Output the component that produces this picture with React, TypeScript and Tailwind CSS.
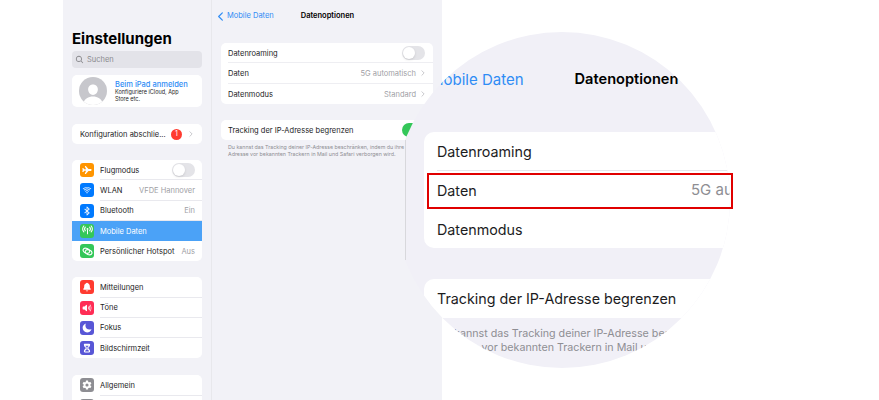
import type { ReactNode } from "react";
import { IoAirplane, IoBluetooth, IoChevronBack, IoChevronForward, IoHourglass, IoMoon, IoNotifications, IoPerson, IoSearch, IoSettingsSharp, IoVolumeHigh, IoWifi } from "react-icons/io5";

function AntennaIcon() {
  return (
    <svg viewBox="0 0 14 14" className="h-[11px] w-[11px]" fill="none" stroke="white" strokeWidth="1.3" strokeLinecap="round">
      <circle cx="7" cy="5" r="1.2" fill="white" stroke="none" />
      <path d="M7 6v5" />
      <path d="M4.3 2.6a3.6 3.6 0 0 0 0 4.8M9.7 2.6a3.6 3.6 0 0 1 0 4.8" />
      <path d="M2.4 1.2a6 6 0 0 0 0 7.6M11.6 1.2a6 6 0 0 1 0 7.6" />
    </svg>
  );
}

function HotspotIcon() {
  return (
    <svg viewBox="0 0 14 14" className="h-[11px] w-[11px]" fill="none" stroke="white" strokeWidth="1.4">
      <ellipse cx="5.6" cy="6" rx="4.4" ry="3" transform="rotate(20 5.6 6)" />
      <ellipse cx="8.4" cy="8" rx="4.4" ry="3" transform="rotate(20 8.4 8)" />
    </svg>
  );
}

function Toggle() {
  return (
    <div className="flex h-[14px] w-[23px] items-center rounded-full bg-[#e4e4e8] p-px">
      <div className="h-[12px] w-[12px] rounded-full bg-white shadow-sm" />
    </div>
  );
}

function SideRow(props: { icon: ReactNode; color: string; label: string; value?: string; toggle?: boolean; active?: boolean; last?: boolean }) {
  const { icon, color, label, value, toggle, active, last } = props;
  return (
    <div className={active ? "flex h-[20.25px] items-center bg-[#4ba2f7] pl-2" : "flex h-[20.25px] items-center pl-2"}>
      <div className={`flex h-[14px] w-[14px] shrink-0 items-center justify-center rounded-[3px] text-[10px] text-white ${color}`}>{icon}</div>
      <div className={`ml-[6px] flex h-full min-w-0 flex-1 items-center justify-between pr-[7px] ${last || active ? "" : "border-b border-[#e9e9ee]"}`}>
        <span className={active ? "pt-px text-[7.5px] text-white" : "pt-px text-[7.5px] text-[#1c1c1e]"}>{label}</span>
        {value && <span className="pt-px text-[7.5px] text-[#a0a0a5]">{value}</span>}
        {toggle && <Toggle />}
      </div>
    </div>
  );
}

function DetailRow(props: { label: string; value?: string; toggle?: boolean; last?: boolean }) {
  return (
    <div className="flex h-[20.3px] items-center pl-[7px]">
      <div className={`flex h-full flex-1 items-center justify-between pr-2 ${props.last ? "" : "border-b border-[#eeeef2]"}`}>
        <span className="pt-px text-[7.5px] text-[#1c1c1e]">{props.label}</span>
        {props.toggle && <Toggle />}
        {props.value && (
          <span className="-mr-[2px] flex items-center gap-[3px] pt-px text-[7.5px] text-[#a0a0a5]">
            {props.value}
            <IoChevronForward className="text-[8px] text-[#b8b8bd]" />
          </span>
        )}
      </div>
    </div>
  );
}

function Sidebar() {
  return (
    <aside className="h-full w-[149px] shrink-0 overflow-hidden border-r border-[#e8e8ec] px-[9px]">
      <div className="flex h-[2px] items-end overflow-hidden text-[7px] text-[#333]">14:41&nbsp;&nbsp;Di. 23. Mai</div>
      <h1 className="mt-[27px] mb-[-1px] text-[15px] leading-5 font-bold text-black">Einstellungen</h1>
      <div className="mt-[3px] flex h-[17px] items-center gap-[3px] rounded-[4px] bg-[#e3e3e9] pl-[3px] text-[7.5px] text-[#8a8a8e]">
        <IoSearch className="text-[9px]" />
        Suchen
      </div>
      <div className="mt-[7px] flex h-[32px] items-center rounded-[5px] bg-white pl-[7px]">
        <div className="flex h-[28px] w-[28px] shrink-0 items-end justify-center overflow-hidden rounded-full bg-[#c7c7cc] text-[24px] text-white">
          <IoPerson className="-mb-[2px]" />
        </div>
        <div className="ml-[8px] w-[76px] min-w-0">
          <div className="text-[7.5px] leading-[9px] font-medium whitespace-nowrap text-[#2f8cf5]">Beim iPad anmelden</div>
          <div className="text-[5.5px] leading-[7px] text-[#1c1c1e]">Konfiguriere iCloud, App<br />Store etc.</div>
        </div>
      </div>
      <div className="mt-[17px] flex h-[20px] items-center rounded-[5px] bg-white pr-[7px] pl-2">
        <span className="flex-1 pt-px text-[7.5px] text-[#1c1c1e]">Konfiguration abschlie...</span>
        <span className="flex h-[11px] w-[11px] items-center justify-center rounded-full bg-[#ff3b30] text-[7px] text-white">1</span>
        <IoChevronForward className="ml-[5px] text-[8px] text-[#b8b8bd]" />
      </div>
      <div className="mt-[16px] overflow-hidden rounded-[5px] bg-white">
        <SideRow icon={<IoAirplane />} color="bg-[#ff9500]" label="Flugmodus" toggle />
        <SideRow icon={<IoWifi />} color="bg-[#007aff]" label="WLAN" value="VFDE Hannover" />
        <SideRow icon={<IoBluetooth />} color="bg-[#007aff]" label="Bluetooth" value="Ein" />
        <SideRow icon={<AntennaIcon />} color="bg-[#34c759]" label="Mobile Daten" active />
        <SideRow icon={<HotspotIcon />} color="bg-[#34c759]" label="Persönlicher Hotspot" value="Aus" last />
      </div>
      <div className="mt-[16px] overflow-hidden rounded-[5px] bg-white">
        <SideRow icon={<IoNotifications />} color="bg-[#ff3b30]" label="Mitteilungen" />
        <SideRow icon={<IoVolumeHigh />} color="bg-[#ff2d55]" label="Töne" />
        <SideRow icon={<IoMoon />} color="bg-[#5856d6]" label="Fokus" />
        <SideRow icon={<IoHourglass />} color="bg-[#5856d6]" label="Bildschirmzeit" last />
      </div>
      <div className="mt-[17px] overflow-hidden rounded-[5px] bg-white">
        <SideRow icon={<IoSettingsSharp />} color="bg-[#8e8e93]" label="Allgemein" />
        <SideRow icon={<IoSettingsSharp />} color="bg-[#8e8e93]" label="Kontrollzentrum" last />
      </div>
    </aside>
  );
}

function Detail() {
  return (
    <main className="h-full min-w-0 flex-1 overflow-hidden px-[9px]">
      <div className="flex h-[2px] items-end justify-end overflow-hidden text-[7px] text-[#333]">100 %</div>
      <div className="mt-[4px] mb-[-1px] flex h-[20px] items-center">
        <IoChevronBack className="-ml-[7px] text-[13px] text-[#2f8cf5]" />
        <span className="text-[7.5px] text-[#2f8cf5]">Mobile Daten</span>
        <span className="ml-[27px] text-[7.5px] font-semibold text-black">Datenoptionen</span>
      </div>
      <div className="mt-[18px] overflow-hidden rounded-[5px] bg-white">
        <DetailRow label="Datenroaming" toggle />
        <DetailRow label="Daten" value="5G automatisch" />
        <DetailRow label="Datenmodus" value="Standard" last />
      </div>
      <div className="mt-[16px] flex h-[20px] items-center justify-between rounded-[5px] bg-white pr-2 pl-[7px]">
        <span className="pt-px text-[7.5px] text-[#1c1c1e]">Tracking der IP-Adresse begrenzen</span>
        <div className="h-[14px] w-[23px] rounded-full bg-[#34c759]" />
      </div>
      <div className="mt-[4px] pl-[7px] text-[5.3px] leading-[7.5px] whitespace-nowrap text-[#8e8e93]">
        <div>Du kannst das Tracking deiner IP-Adresse beschränken, indem du ihre IP-</div>
        <div>Adresse vor bekannten Trackern in Mail und Safari verborgen wird.</div>
      </div>
    </main>
  );
}

function MagnifiedRow(props: { label: string; value?: string; last?: boolean }) {
  return (
    <div className="flex h-[38.7px] items-center pl-[13px]">
      <div className={`flex h-full flex-1 items-center justify-between pr-[32px] ${props.last ? "" : "border-b border-[#e6e6ea]"}`}>
        <span className="pt-[2px] text-[14.3px] text-[#1c1c1e]">{props.label}</span>
        {props.value && <span className="pt-[2px] text-[15px] text-[#8e8e93]">{props.value}</span>}
      </div>
    </div>
  );
}

function Magnifier() {
  return (
    <>
      {/* the round lens is cut off flat on its left side */}
      <div className="absolute top-[32px] left-[405px] h-[336px] w-[325px] overflow-hidden">
        <div className="absolute top-[108px] left-0 h-[120px] w-px bg-[#d8d8dc]" />
        <div className="-ml-[11px] h-[336px] w-[336px] overflow-hidden rounded-full bg-[#f1f0f7]">
          <div className="w-[440px] pt-[38px] pl-[30px]">
            <div className="flex h-[20px] items-center pl-[6px]">
              <span className="text-[15px] text-[#2f8cf5]">Mobile Daten</span>
              <span className="ml-[51px] text-[14.6px] font-semibold text-black">Datenoptionen</span>
            </div>
            <div className="mt-[42px] overflow-hidden rounded-[10px] bg-white">
              <MagnifiedRow label="Datenroaming" />
              <MagnifiedRow label="Daten" value="5G automatisch" />
              <MagnifiedRow label="Datenmodus" last />
            </div>
            <div className="mt-[31px] flex h-[39px] items-center rounded-[10px] bg-white pl-[13px] text-[14.3px] text-[#1c1c1e]">
              Tracking der IP-Adresse begrenzen
            </div>
            <div className="mt-[9px] pl-[13px] text-[10.7px] leading-[14px] whitespace-nowrap text-[#8e8e93]">
              <div>Du kannst das Tracking deiner IP-Adresse beschränken, indem du ihre IP-</div>
              <div>Adresse vor bekannten Trackern in Mail und Safari verborgen wird.</div>
            </div>
          </div>
        </div>
      </div>
      <div className="absolute top-[173px] left-[427px] h-[36px] w-[306px] border-2 border-[#e00000]" />
    </>
  );
}

export default function App() {
  return (
    <div className="relative h-[400px] w-[879px] overflow-hidden bg-white [font-family:Inter,sans-serif]">
      <div className="ml-[63px] flex h-full w-[379px] bg-[#f2f2f7]">
        <Sidebar />
        <Detail />
      </div>
      <Magnifier />
    </div>
  );
}
